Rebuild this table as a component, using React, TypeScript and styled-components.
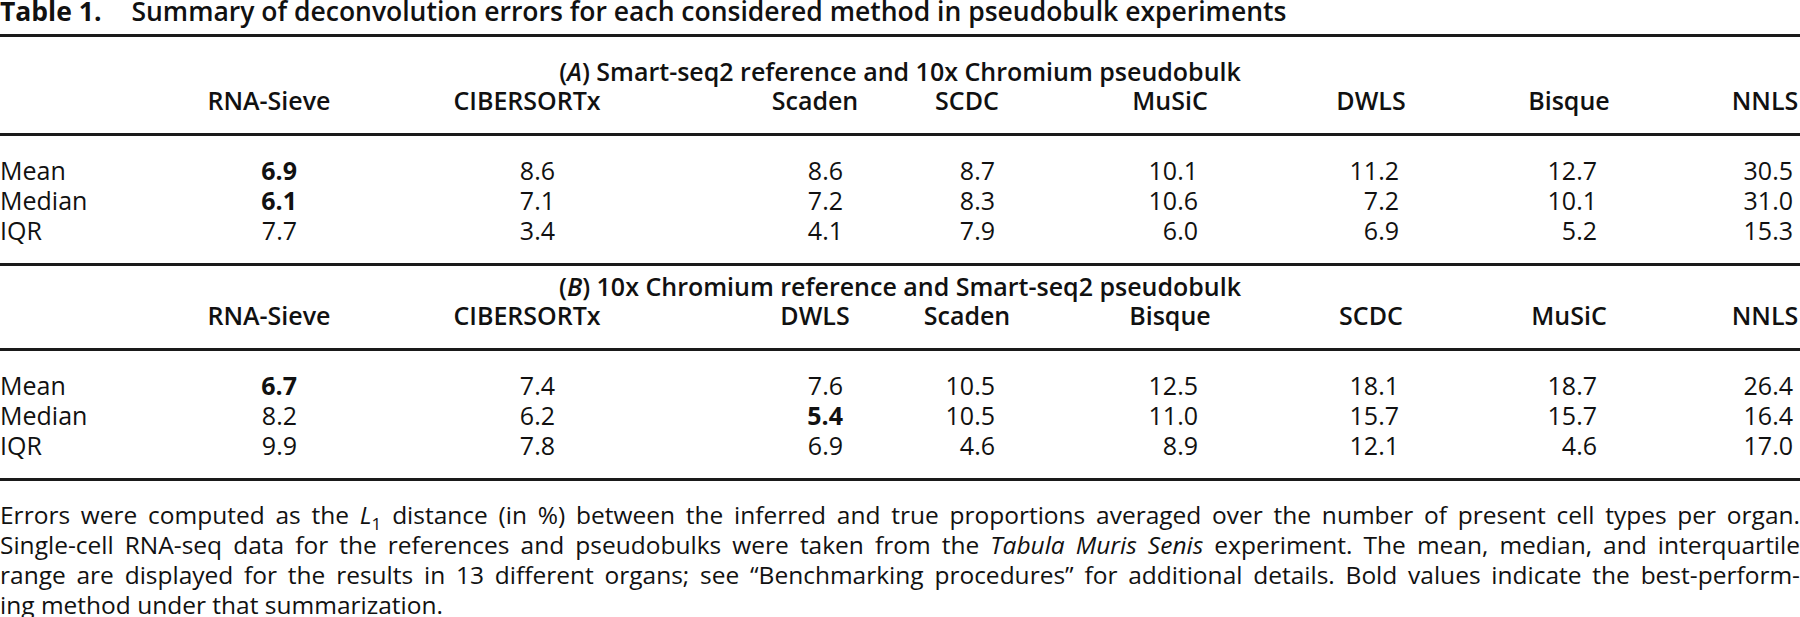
import styled, { createGlobalStyle } from "styled-components";

type Cell = { v: string; bold?: boolean };
type Block = {
  tag: string;
  title: string;
  heads: string[];
  rows: { label: string; cells: Cell[] }[];
};

// horizontal centre of each method column (px from left edge)
const CENTERS = [269, 527, 815, 967, 1170, 1371, 1569, 1765];
const HALF = 60;
const TRACKS = CENTERS.map((c, i) => {
  const prevEnd = i === 0 ? 0 : CENTERS[i - 1] + HALF;
  return `${c - HALF - prevEnd}px ${HALF * 2}px`;
}).join(" ");

const c = (v: string, bold = false): Cell => ({ v, bold });

const BLOCKS: Block[] = [
  {
    tag: "A",
    title: "Smart-seq2 reference and 10x Chromium pseudobulk",
    heads: ["RNA-Sieve", "CIBERSORTx", "Scaden", "SCDC", "MuSiC", "DWLS", "Bisque", "NNLS"],
    rows: [
      { label: "Mean", cells: [c("6.9", true), c("8.6"), c("8.6"), c("8.7"), c("10.1"), c("11.2"), c("12.7"), c("30.5")] },
      { label: "Median", cells: [c("6.1", true), c("7.1"), c("7.2"), c("8.3"), c("10.6"), c("7.2"), c("10.1"), c("31.0")] },
      { label: "IQR", cells: [c("7.7"), c("3.4"), c("4.1"), c("7.9"), c("6.0"), c("6.9"), c("5.2"), c("15.3")] },
    ],
  },
  {
    tag: "B",
    title: "10x Chromium reference and Smart-seq2 pseudobulk",
    heads: ["RNA-Sieve", "CIBERSORTx", "DWLS", "Scaden", "Bisque", "SCDC", "MuSiC", "NNLS"],
    rows: [
      { label: "Mean", cells: [c("6.7", true), c("7.4"), c("7.6"), c("10.5"), c("12.5"), c("18.1"), c("18.7"), c("26.4")] },
      { label: "Median", cells: [c("8.2"), c("6.2"), c("5.4", true), c("10.5"), c("11.0"), c("15.7"), c("15.7"), c("16.4")] },
      { label: "IQR", cells: [c("9.9"), c("7.8"), c("6.9"), c("4.6"), c("8.9"), c("12.1"), c("4.6"), c("17.0")] },
    ],
  },
];

const GlobalStyle = createGlobalStyle`
  html, body {
    margin: 0;
    padding: 0;
    background: #fff;
    overflow: hidden;
  }
  body {
    color: #111;
    font-family: "Open Sans", "Noto Sans", "Liberation Sans", sans-serif;
  }
`;

const Page = styled.div`
  width: 1800px;
  display: flex;
  flex-direction: column;
`;

const Title = styled.h1`
  margin: 0;
  font-size: 26.5px;
  line-height: 22px;
  font-weight: 600;
  white-space: nowrap;
`;

const TitleLabel = styled.span`
  font-weight: 700;
  margin-right: 30px;
`;

const Rule = styled.div<{ $size: number; $gap: number }>`
  height: ${(p) => p.$size}px;
  margin-top: ${(p) => p.$gap}px;
  background: #1a1a1a;
`;

const BlockTitle = styled.div<{ $gap: number }>`
  margin-top: ${(p) => p.$gap}px;
  font-size: 25px;
  line-height: 29px;
  font-weight: 600;
  text-align: center;
  white-space: nowrap;
`;

const Row = styled.div<{ $lh: number }>`
  display: grid;
  grid-template-columns: ${TRACKS};
  font-size: 25px;
  line-height: ${(p) => p.$lh}px;
  white-space: nowrap;
`;

const HeadCell = styled.div<{ $col: number }>`
  grid-column: ${(p) => 2 + p.$col * 2};
  display: flex;
  justify-content: center;
  font-weight: 600;
`;

const Label = styled.div`
  grid-column: 1;
`;

const Value = styled.div<{ $col: number; $bold?: boolean }>`
  grid-column: ${(p) => 2 + p.$col * 2};
  text-align: right;
  padding-right: ${HALF - 28}px;
  font-weight: ${(p) => (p.$bold ? 700 : 400)};
`;

const Body = styled.div<{ $gap: number }>`
  margin-top: ${(p) => p.$gap}px;
  display: flex;
  flex-direction: column;
`;

const Note = styled.div`
  margin-top: 19px;
  font-size: 24.5px;
  line-height: 30px;
`;

const NoteLine = styled.div<{ $last?: boolean }>`
  white-space: nowrap;
  text-align: ${(p) => (p.$last ? "left" : "justify")};
  text-align-last: ${(p) => (p.$last ? "left" : "justify")};
`;

const Sub = styled.sub`
  font-size: 0.7em;
  line-height: 0;
`;

function TableBlock({ block, first }: { block: Block; first: boolean }) {
  return (
    <>
      <BlockTitle $gap={first ? 20 : 6}>
        (<i>{block.tag}</i>) {block.title}
      </BlockTitle>
      <Row $lh={29}>
        {block.heads.map((h, i) => (
          <HeadCell key={h} $col={i}>
            {h}
          </HeadCell>
        ))}
      </Row>
      <Rule $size={3} $gap={18} />
      <Body $gap={19}>
        {block.rows.map((r) => (
          <Row key={r.label} $lh={30}>
            <Label>{r.label}</Label>
            {r.cells.map((cell, i) => (
              <Value key={i} $col={i} $bold={cell.bold}>
                {cell.v}
              </Value>
            ))}
          </Row>
        ))}
      </Body>
      <Rule $size={3} $gap={18} />
    </>
  );
}

export default function App() {
  return (
    <Page>
      <GlobalStyle />
      <Title>
        <TitleLabel>Table 1.</TitleLabel>
        Summary of deconvolution errors for each considered method in pseudobulk experiments
      </Title>
      <Rule $size={3} $gap={12} />
      {BLOCKS.map((b, i) => (
        <TableBlock key={b.tag} block={b} first={i === 0} />
      ))}
      <Note>
        <NoteLine>
          Errors were computed as the <i>L</i>
          <Sub>1</Sub> distance (in %) between the inferred and true proportions averaged over the number of
          present cell types per organ.
        </NoteLine>
        <NoteLine>
          Single-cell RNA-seq data for the references and pseudobulks were taken from the{" "}
          <i>Tabula Muris Senis</i> experiment. The mean, median, and interquartile
        </NoteLine>
        <NoteLine>
          range are displayed for the results in 13 different organs; see “Benchmarking procedures” for
          additional details. Bold values indicate the best-perform-
        </NoteLine>
        <NoteLine $last>ing method under that summarization.</NoteLine>
      </Note>
    </Page>
  );
}
